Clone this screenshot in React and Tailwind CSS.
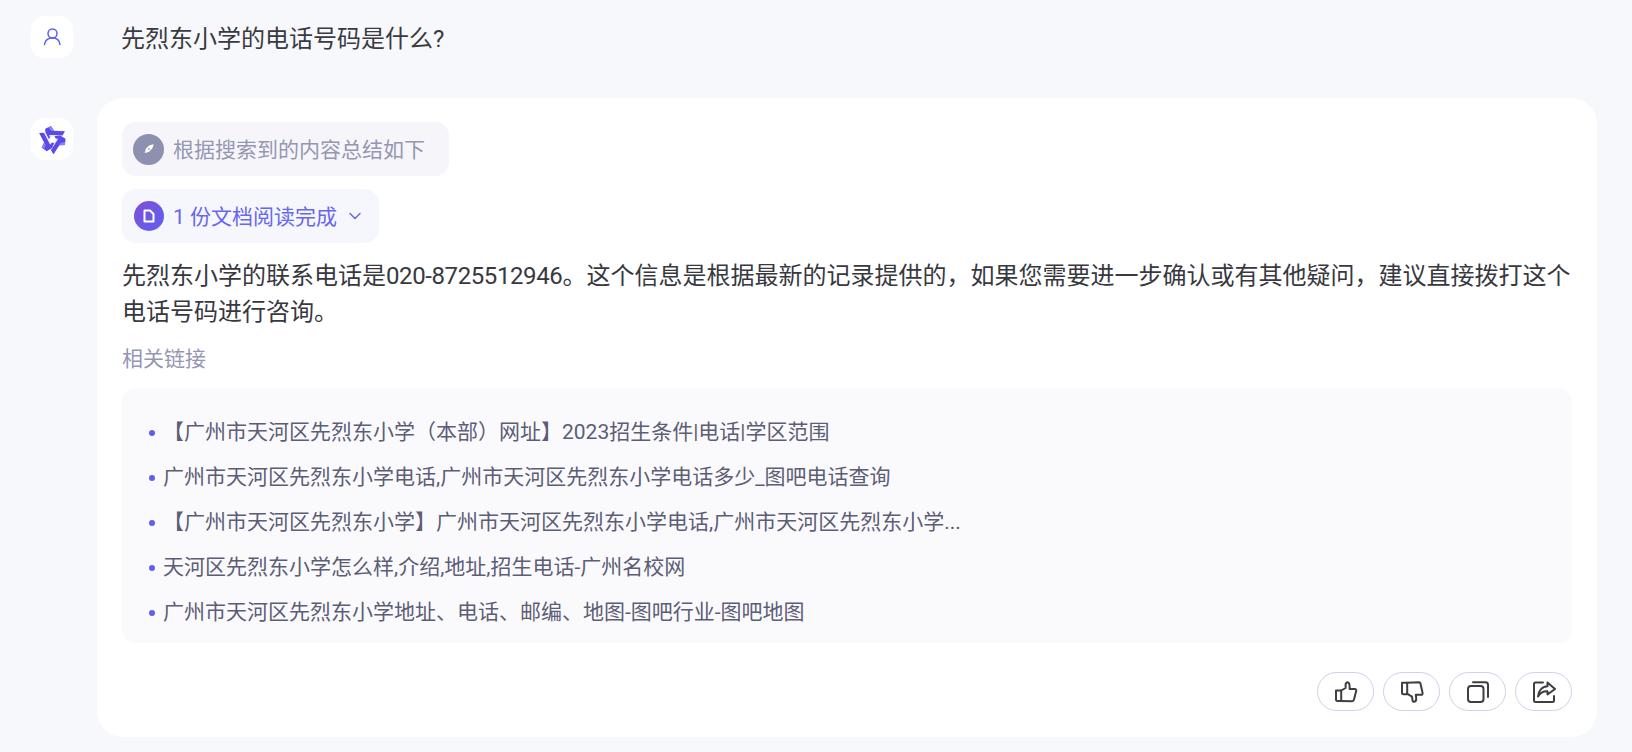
import React from "react";

const font = { fontFamily: 'Roboto, "Noto Sans CJK SC", sans-serif' };

const links = [
  "【广州市天河区先烈东小学（本部）网址】2023招生条件|电话|学区范围",
  "广州市天河区先烈东小学电话,广州市天河区先烈东小学电话多少_图吧电话查询",
  "【广州市天河区先烈东小学】广州市天河区先烈东小学电话,广州市天河区先烈东小学...",
  "天河区先烈东小学怎么样,介绍,地址,招生电话-广州名校网",
  "广州市天河区先烈东小学地址、电话、邮编、地图-图吧行业-图吧地图",
];

function Logo() {
  const piece = (
    <>
      <path d="M7 3.500 L12.500 1 L15.500 5.500 L26 6 L23.500 10.500 L12.500 10.200 L10.500 14 L7 9.500 Z" fill="#5a4ae6" />
      <path d="M12.500 1 L15.500 5.500 L13 5.700 L10 2.400 Z" fill="#8f80f7" />
      <path d="M11 10.300 L24 10.800" stroke="#f1efff" strokeWidth="1.400" />
    </>
  );
  return (
    <svg width="29" height="29" viewBox="0 0 28 28" fill="none">
      <g>{piece}</g>
      <g transform="rotate(120 14 14)">{piece}</g>
      <g transform="rotate(240 14 14)">{piece}</g>
      <path d="M14 11.500 L16.200 15.300 L11.800 15.300 Z" fill="#fff" />
    </svg>
  );
}

const iconProps = {
  width: 24,
  height: 24,
  viewBox: "0 0 24 24",
  fill: "none",
  stroke: "#3f3f42",
  strokeWidth: 2,
  strokeLinejoin: "round",
  strokeLinecap: "round",
};

function ThumbUp() {
  return (
    <svg {...iconProps}>
      <path d="M2 10.500h5.200V21H3.200A1.200 1.200 0 0 1 2 19.800z" />
      <path d="M7.200 10.500 11.600 8V4.500C11.600 3 13 2 14 2.500c1.200.6 1.600 2 1.600 3.200V9h5.200c1 0 1.700 1 1.400 2l-2.300 8.800c-.2.800-.9 1.400-1.700 1.400L6 21" />
    </svg>
  );
}

function ThumbDown() {
  return (
    <svg {...iconProps}>
      <path d="M2 2.800h5.200v11.500H3.400A1.400 1.400 0 0 1 2 12.900z" />
      <path d="M7.200 2.800 19 2.200c.7 0 1.200.4 1.400 1L22.600 13c.2 1-.5 1.800-1.400 1.800h-5.400l.4 3.400c.1 1.500-.7 3.300-2 3.600-1 .2-1.600-.6-1.700-1.500l-.5-3.600-5-3" />
    </svg>
  );
}

function CopyIcon() {
  return (
    <svg {...iconProps}>
      <rect x="2" y="6" width="15.500" height="16" rx="3" />
      <path d="M7 2.200h12.500A2.500 2.500 0 0 1 22 4.700V17" />
    </svg>
  );
}

function ShareIcon() {
  return (
    <svg {...iconProps}>
      <path d="M11 2.500H3.500A1.500 1.500 0 0 0 2 4v16.500A1.500 1.500 0 0 0 3.500 22h17a1.500 1.500 0 0 0 1.500-1.500V16" />
      <path d="M15.500 2.500 23 9l-7.500 5.500v-3.200C11 11 8 13 6 16.500c.3-5.500 4-10 9.500-10.200z" />
    </svg>
  );
}

function Action({ children }) {
  return (
    <button className="w-[57px] h-[39px] rounded-[20px] border border-[#cdd2e8] bg-white flex items-center justify-center">
      {children}
    </button>
  );
}

export default function App() {
  return (
    <div className="w-[1632px] h-[752px] overflow-hidden bg-[#f7f8fc] text-[#333338]" style={font}>
      <div className="flex items-start pl-[31px] pt-[16px] h-[98px]">
        <div className="w-[42px] h-[42px] rounded-[13px] bg-white flex items-center justify-center shrink-0">
          <svg width="20" height="20" viewBox="0 0 20 20" fill="none" stroke="#5f5ef0" strokeWidth="1.500" strokeLinecap="round">
            <circle cx="10.500" cy="6.500" r="4.500" />
            <path d="M2.500 17.500c.6-4 3.800-6.500 8-6.500s7 2.500 7.500 6.500" />
          </svg>
        </div>
        <div className="ml-[48px] text-[24px] leading-[46px] h-[42px] text-[#3a3a42]">先烈东小学的电话号码是什么?</div>
      </div>

      <div className="flex pl-[31px]">
        <div className="w-[42px] h-[42px] rounded-[13px] bg-white flex items-center justify-center shrink-0 mt-[20px]">
          <Logo />
        </div>
        <div className="ml-[24px] w-[1500px] h-[639px] bg-white rounded-[26px] px-[25px] pt-[24px]">
          <div className="w-fit h-[54px] rounded-[14px] bg-[#f6f6fa] flex items-center pl-[11px] pr-[24px]">
            <div className="w-[31px] h-[31px] rounded-full bg-[#8e90b0] flex items-center justify-center">
              <svg width="12" height="12" viewBox="0 0 14 14" fill="#fff">
                <path d="M12.500 1.500 7.500 2.500 3.500 6.500 2 11.800 6.800 10.500 10.800 6.500Z" />
                <circle cx="7" cy="7" r="1" fill="#8e90b0" />
              </svg>
            </div>
            <span className="ml-[9px] text-[21px] leading-[36px] h-[34px] text-[#9496b4]">根据搜索到的内容总结如下</span>
          </div>
          <div className="w-fit h-[54px] mt-[13px] rounded-[14px] bg-[#f6f7fc] flex items-center pl-[12px] pr-[17px]">
            <div className="w-[30px] h-[30px] rounded-full bg-gradient-to-br from-[#7c4fd6] to-[#5f5ff0] flex items-center justify-center">
              <svg width="12" height="14" viewBox="0 0 12 14" fill="none" stroke="#fff" strokeWidth="2">
                <path d="M1.500 1.500h5.500L10.500 5v7.500h-9z" strokeLinejoin="round" />
              </svg>
            </div>
            <span className="ml-[9px] text-[21px] leading-[36px] h-[34px] text-[#6766f0]">1 份文档阅读完成</span>
            <svg className="ml-[11px]" width="14" height="14" viewBox="0 0 14 14" fill="none" stroke="#6766f0" strokeWidth="1.500" strokeLinecap="round" strokeLinejoin="round">
              <path d="M2 4.500 7 9.500 12 4.500" />
            </svg>
          </div>
          <p className="mt-[15px] text-[24px] leading-[36px] text-[#38383f]">
            先烈东小学的联系电话是<span className="tracking-[-0.4px]">020-8725512946</span>。这个信息是根据最新的记录提供的，如果您需要进一步确认或有其他疑问，建议直接拨打这个电话号码进行咨询。
          </p>
          <div className="mt-[13px] text-[21px] leading-[32px] text-[#9496b4]">相关链接</div>
          <div className="mt-[13px] h-[255px] rounded-[14px] bg-[#fafafc] pl-[27px] pt-[22px]">
            {links.map((t) => (
              <div key={t} className="flex items-center h-[45px] text-[21px] text-[#5c5d76]">
                <span className="w-[6px] h-[6px] rounded-full bg-[#6160e8] shrink-0 mr-[8px]" />
                <span>{t}</span>
              </div>
            ))}
          </div>
          <div className="flex justify-end gap-[9px] mt-[29px]">
            <Action><ThumbUp /></Action>
            <Action><ThumbDown /></Action>
            <Action><CopyIcon /></Action>
            <Action><ShareIcon /></Action>
          </div>
        </div>
      </div>
    </div>
  );
}
